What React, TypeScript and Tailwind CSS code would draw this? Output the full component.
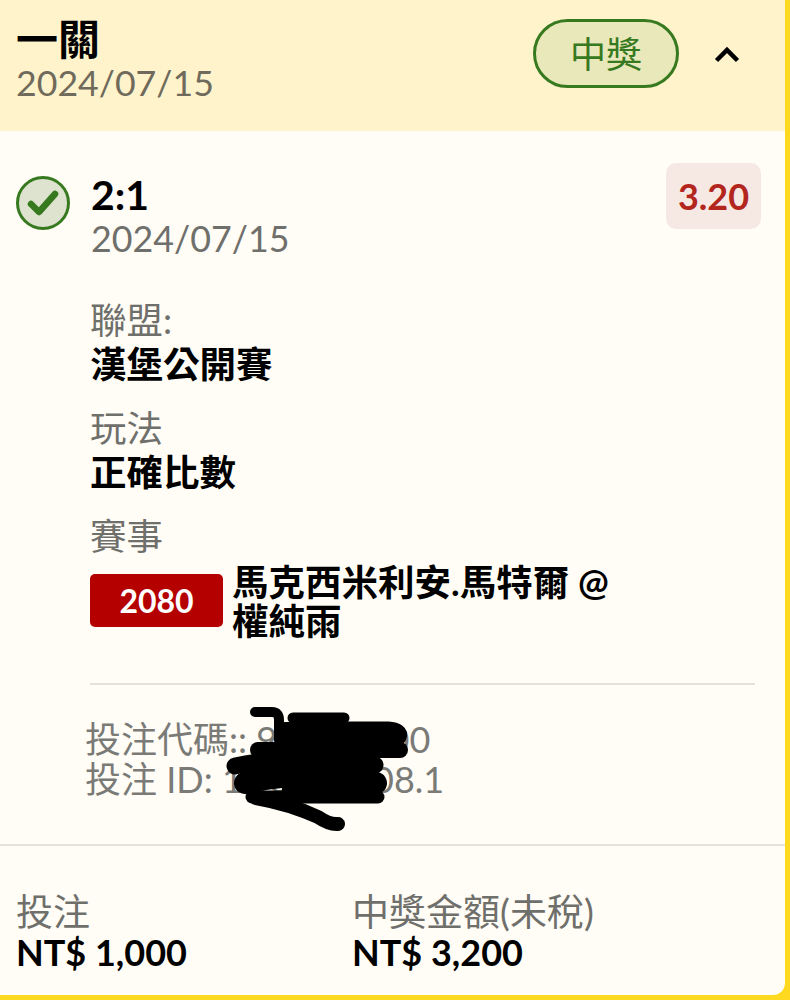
import React from "react";

const font = { fontFamily: '"Lato", "Noto Sans CJK TC", sans-serif' };

function Scribble() {
  return (
    <svg className="absolute left-[225px] top-[700px]" width="200" height="140" viewBox="225 700 200 140" fill="none" stroke="#000" strokeLinecap="round" strokeLinejoin="round">
      <path d="M255 712 H272 Q279 712 279 720 V740" strokeWidth="10" />
      <path d="M293 718 H344" strokeWidth="11" />
      <path d="M293 729 H388 Q402 730 399 737 L293 738" strokeWidth="15" />
      <path d="M258 750 H400" strokeWidth="16" />
      <path d="M235 766 Q300 752 375 765" strokeWidth="17" />
      <path d="M245 783 Q310 768 376 783" strokeWidth="22" />
      <path d="M252 797 H378" strokeWidth="13" />
      <path d="M285 725 H370 V800 H285 Z" fill="#000" strokeWidth="6" />
      <path d="M256 798 Q290 804 318 817 Q330 825 338 824" strokeWidth="14" />
    </svg>
  );
}

export default function App() {
  return (
    <div style={font} className="relative w-[790px] h-[1000px] overflow-hidden bg-[#ffd920]">
      <div className="w-[785px] h-[995px] bg-[#fffdf6] rounded-br-[12px] overflow-hidden flex flex-col">
        <header className="h-[131px] shrink-0 bg-[#fff3cc] flex items-start justify-between pl-[16px] pr-[45px] pt-[16px]">
          <div>
            <div className="text-[42px] leading-[46px] font-bold text-black">一關</div>
            <div className="text-[35.7px] leading-[42px] text-[#6f6a5b]">2024/07/15</div>
          </div>
          <div className="flex items-center gap-[35px] pt-[3px]">
            <div className="w-[146px] h-[69px] rounded-full border-[3px] border-[#37791f] bg-[#e9e8ba] flex items-center justify-center text-[36px] text-[#37791f]">中獎</div>
            <svg width="26" height="18" viewBox="0 0 26 18" fill="none" stroke="#000" strokeWidth="4.5" strokeLinejoin="miter">
              <path d="M2.5 15.5 L13 5 L23.5 15.5" />
            </svg>
          </div>
        </header>

        <section className="h-[713px] shrink-0 relative pt-[32px] pl-[16px] pr-[24px]">
          <div className="flex items-start">
            <div className="mt-[13px] w-[54px] h-[54px] shrink-0 rounded-full border-[3px] border-[#37791f] bg-[#dde3cf] flex items-center justify-center">
              <svg width="34" height="28" viewBox="0 0 34 28" fill="none" stroke="#37791f" strokeWidth="6.5" strokeLinecap="round" strokeLinejoin="round">
                <path d="M5 15 L13 23 L29 5" />
              </svg>
            </div>
            <div className="ml-[21px] flex-1">
              <div className="text-[41px] leading-[44px] pt-[10px] font-bold text-black">2:1</div>
              <div className="text-[35.8px] leading-[44px] text-[#6f6f6b]">2024/07/15</div>
            </div>
            <div className="w-[95px] h-[66px] rounded-[10px] bg-[#f6e9e3] flex items-center justify-center text-[36px] font-bold text-[#b3261e]">3.20</div>
          </div>

          <div className="pl-[74px] pt-[37px]">
            <div className="text-[36.5px] leading-[44px] text-[#6f6f6b]">聯盟:</div>
            <div className="text-[36.5px] leading-[44px] font-bold text-black">漢堡公開賽</div>
            <div className="text-[36.5px] leading-[44px] mt-[20px] text-[#6f6f6b]">玩法</div>
            <div className="text-[36.5px] leading-[44px] font-bold text-black">正確比數</div>
            <div className="text-[36.5px] leading-[44px] mt-[20px] text-[#6f6f6b]">賽事</div>
            <div className="flex items-start mt-[6px]">
              <div className="w-[133px] h-[53px] mt-[10px] rounded-[5px] bg-[#b50000] flex items-center justify-center text-[32px] text-white font-bold">2080</div>
              <div className="ml-[9px] w-[385px] text-[36.5px] leading-[39px] -mt-[1px] font-bold text-black">馬克西米利安.馬特爾 @ 權純雨</div>
            </div>
            <div className="mt-[42px] h-[2px] bg-[#e4e2da] w-[665px]" />
          </div>

          <div className="pl-[69px] pt-[34px] text-[36px] leading-[40px] text-[#7a7a76]">
            <div>投注代碼:: 9<span className="ml-[7px]">0000000</span></div>
            <div>投注 ID: 1<span className="ml-[5px]">00000008.1</span></div>
          </div>
        </section>

        <div className="h-[2px] shrink-0 bg-[#e4e2da]" />

        <footer className="flex pl-[16px] pt-[46px]">
          <div className="w-[336px]">
            <div className="text-[37px] leading-[40px] text-[#6f6f6b]">投注</div>
            <div className="text-[36px] leading-[40px] font-bold text-black">NT$ 1,000</div>
          </div>
          <div>
            <div className="text-[37px] leading-[40px] text-[#6f6f6b]">中獎金額(未稅)</div>
            <div className="text-[36px] leading-[40px] font-bold text-black">NT$ 3,200</div>
          </div>
        </footer>
      </div>
      <Scribble />
    </div>
  );
}
